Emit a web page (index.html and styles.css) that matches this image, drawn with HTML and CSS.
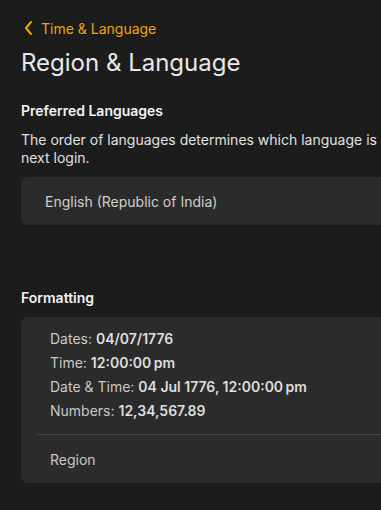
FILE: index.html
```html
<!DOCTYPE html>
<html lang="en">
<head>
    <meta charset="UTF-8">
    <meta name="viewport" content="width=device-width, initial-scale=1.0">
    <title>Region & Language</title>
    <link rel="stylesheet" href="styles.css">
</head>
<body>
    <div class="page">
        <a class="back-link" href="#">
            <svg class="chevron" width="10" height="16" viewBox="0 0 10 16">
                <path d="M8 2 L3 8 L8 14" fill="none" stroke="currentColor" stroke-width="2" stroke-linecap="round" stroke-linejoin="round"/>
            </svg>
            <span>Time &amp; Language</span>
        </a>
        <h1>Region &amp; Language</h1>

        <section class="section">
            <h2>Preferred Languages</h2>
            <p class="description">The order of languages determines which language is used at the next login.</p>
            <div class="card">
                <div class="row">English (Republic of India)</div>
            </div>
        </section>

        <section class="section formatting">
            <h2>Formatting</h2>
            <div class="card">
                <div class="format-list">
                    <p>Dates: <strong>04/07/1776</strong></p>
                    <p>Time: <strong>12:00:00&#8239;pm</strong></p>
                    <p>Date &amp; Time: <strong>04 Jul 1776, 12:00:00&#8239;pm</strong></p>
                    <p>Numbers: <strong>12,34,567.89</strong></p>
                </div>
                <div class="divider"></div>
                <div class="region-row">Region</div>
            </div>
        </section>
    </div>
</body>
</html>
```

FILE: styles.css
```css
html, body {
    margin: 0;
    background-color: #1c1c1c;
    overflow: hidden;
}
body {
    font-family: Inter, "Noto Sans", sans-serif;
    color: #e6e6e6;
}
.page {
    width: 440px;
    padding: 16px 0 0 21px;
}
.back-link {
    display: flex;
    align-items: center;
    gap: 8px;
    color: #f0a500;
    text-decoration: none;
    font-size: 14px;
    height: 24px;
    padding-left: 2px;
}
h1 {
    margin: 7px 0 0;
    font-size: 24px;
    font-weight: 400;
    line-height: 32px;
    color: #e8e8e8;
}
.section {
    margin-top: 22px;
}
h2 {
    margin: 0;
    font-size: 14px;
    font-weight: 600;
    line-height: 20px;
    color: #f2f2f2;
}
.description {
    margin: 10px 0 10px;
    font-size: 14px;
    line-height: 18px;
    color: #e0e0e0;
}
.card {
    background-color: #2b2b2b;
    border-radius: 7px;
}
.row {
    height: 48px;
    display: flex;
    align-items: center;
    padding-left: 24px;
    font-size: 14px;
    color: #cfcfcf;
}
.formatting {
    margin-top: 63px;
}
.formatting h2 {
    margin-bottom: 9px;
}
.format-list {
    padding: 10px 0 11px 29px;
}
.format-list p {
    margin: 0;
    font-size: 14px;
    line-height: 24px;
    color: #c8c8c8;
}
.format-list strong {
    font-weight: 600;
    color: #dedede;
}
.divider {
    height: 1px;
    background-color: #444;
    margin-left: 16px;
}
.region-row {
    height: 48px;
    display: flex;
    align-items: center;
    padding-left: 29px;
    font-size: 14px;
    color: #c8c8c8;
}
```
